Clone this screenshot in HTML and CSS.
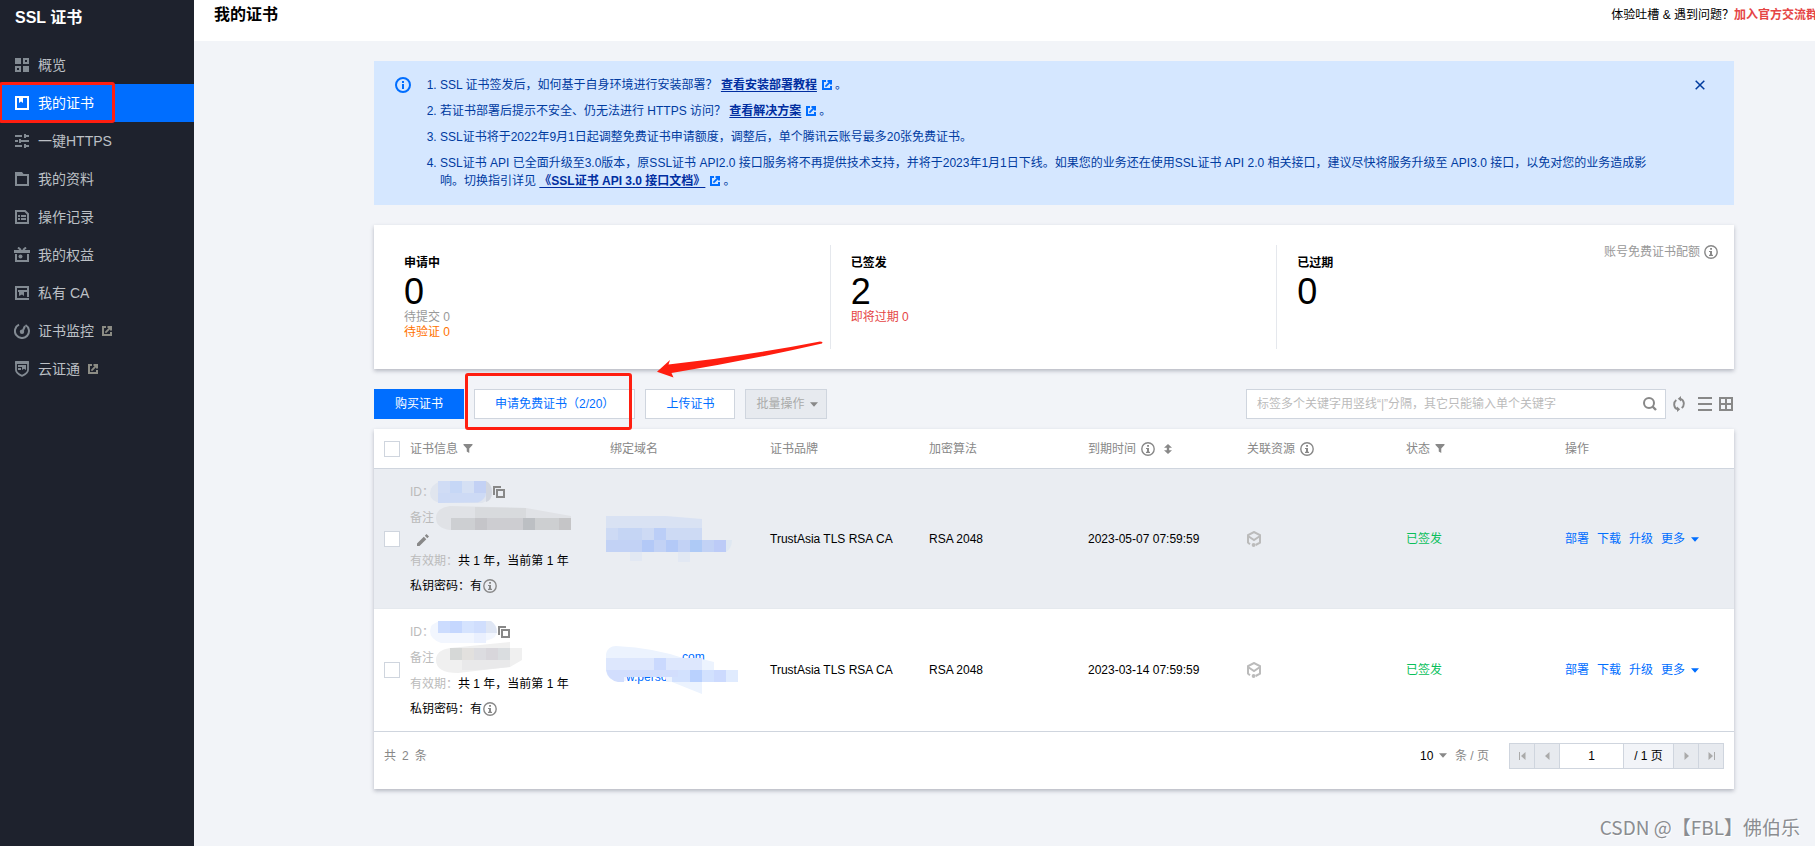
FILE: index.html
```html
<!DOCTYPE html>
<html lang="zh-CN">
<head>
<meta charset="utf-8">
<meta name="viewport" content="width=device-width, initial-scale=1">
<title>SSL 证书 - 我的证书</title>
<link rel="stylesheet" href="styles.css">
</head>
<body>
<svg class="sprite" aria-hidden="true">
  <symbol id="i-info" viewBox="0 0 14 14"><circle cx="7" cy="7" r="6.2" fill="none" stroke="currentColor" stroke-width="1.4"/><path d="M6.100 3h1.900v1.800H6.100zM5 6h3v3.700H9v1.200H5V9.700h1V7H5z" fill="currentColor"/></symbol>
  <symbol id="i-ext" viewBox="0 0 10 10"><path d="M4 1H1v8h8V6M5.500 1H9v3.500" fill="none" stroke="currentColor" stroke-width="2"/><path d="M9 1L3.400 6.600" stroke="currentColor" stroke-width="1.800"/></symbol>
  <symbol id="i-filter" viewBox="0 0 10 10"><path d="M0 0h10v1L6.4 5v5L3.6 8.4V5L0 1z" fill="currentColor"/></symbol>
  <symbol id="i-copy" viewBox="0 0 12 12"><path d="M1 9V1h7" fill="none" stroke="currentColor" stroke-width="2"/><path d="M4 4h7v7H4z" fill="none" stroke="currentColor" stroke-width="2"/></symbol>
  <symbol id="i-down" viewBox="0 0 8 5"><path d="M0 .3h8L4 4.8z" fill="currentColor"/></symbol>
  <symbol id="i-res" viewBox="0 0 14 16"><path d="M1 11.5V4.2L7 1l6 3.2v7.4L8.6 14M1 5l6 4 6-4" fill="none" stroke="currentColor" stroke-width="2"/><circle cx="6.6" cy="14" r="1.9" fill="currentColor"/><path d="M.2 11l2.8 2.2" stroke="currentColor" stroke-width="2"/></symbol>
</svg>
<div class="app">
  <aside class="side">
    <h2 class="side-title">SSL 证书</h2>
    <nav>
      <ul class="menu">
        <li><a href="#"><svg class="ico" viewBox="0 0 14 14"><path d="M0 0h6v6H0zM8 8h6v6H8z" fill="currentColor"/><path d="M9 1h4v4H9zM1 9h4v4H1z" fill="none" stroke="currentColor" stroke-width="2"/></svg>概览</a></li>
        <li class="active"><a href="#"><svg class="ico" viewBox="0 0 14 14"><path d="M1 1h12v12H1z" fill="none" stroke="currentColor" stroke-width="2"/><path d="M4 1h4v6L6 5.500 4 7z" fill="currentColor"/></svg>我的证书</a><span class="mark mark-menu"></span></li>
        <li><a href="#"><svg class="ico" viewBox="0 0 14 14"><path d="M0 2h7M9 2h5M10 0v4M0 7h3M6 7h8M5 5v4M0 12h7M9 12h5M10 10v4" fill="none" stroke="currentColor" stroke-width="2"/></svg>一键HTTPS</a></li>
        <li><a href="#"><svg class="ico" viewBox="0 0 14 14"><path d="M1 3h12v10H1z" fill="none" stroke="currentColor" stroke-width="2"/><path d="M0 0h7l1.500 2v1H0z" fill="currentColor"/></svg>我的资料</a></li>
        <li><a href="#"><svg class="ico" viewBox="0 0 14 14"><path d="M1 1h9l3 3v9H1z" fill="none" stroke="currentColor" stroke-width="2"/><path d="M3 5h2v2H3zM6 5h5v2H6zM3 8h2v2H3zM6 8h5v2H6z" fill="currentColor"/></svg>操作记录</a></li>
        <li><a href="#"><svg class="ico wide" viewBox="0 0 16 16"><path d="M2 7v7h12V7" fill="none" stroke="currentColor" stroke-width="2"/><path d="M0 3h16v3H0z" fill="currentColor"/><path d="M4 .5L7 3M12 .5L9 3" stroke="currentColor" stroke-width="2"/><circle cx="6.500" cy="9.500" r="2" fill="currentColor"/></svg>我的权益</a></li>
        <li><a href="#"><svg class="ico" viewBox="0 0 14 14"><path d="M1 0v14M0 1h14M0 13h14M13 0v4M13 6v5M3 5h11" fill="none" stroke="currentColor" stroke-width="2"/><path d="M4 6h5v4L7 8.500 4 10z" fill="currentColor"/></svg>私有 CA</a></li>
        <li><a href="#"><svg class="ico wide" viewBox="0 0 16 16"><path d="M5 1.700A7 7 0 1 0 11.500 2" fill="none" stroke="currentColor" stroke-width="2"/><circle cx="8" cy="8.800" r="2.200" fill="currentColor"/><path d="M8.500 8.500L11 3" stroke="currentColor" stroke-width="2"/></svg>证书监控<svg class="ext"><use href="#i-ext"/></svg></a></li>
        <li><a href="#"><svg class="ico tall" viewBox="0 0 14 16"><path d="M1 1h12v8c0 3-3 4.500-6 5.800C4 13.500 1 12 1 9z" fill="none" stroke="currentColor" stroke-width="1.800"/><path d="M0 2h14M3 5h4M3 8h3" stroke="currentColor" stroke-width="1.800"/><path d="M7 4h4v5L9 7.800 7 9z" fill="currentColor"/></svg>云证通<svg class="ext"><use href="#i-ext"/></svg></a></li>
      </ul>
    </nav>
  </aside>
  <div class="main">
    <header class="top">
      <h1 class="page-title">我的证书</h1>
      <p class="feedback">体验吐槽 &amp; 遇到问题？<a href="#">加入官方交流群</a></p>
    </header>
    <main class="content">
      <section class="alert">
        <svg class="alert-icon" viewBox="0 0 16 16"><circle cx="8" cy="8" r="7" fill="none" stroke="currentColor" stroke-width="2"/><path d="M7 4h2v2H7zM7 7h2v5H7z" fill="currentColor"/></svg>
        <ol class="alert-list">
          <li>SSL 证书签发后，如何基于自身环境进行安装部署？ <a href="#">查看安装部署教程</a><svg class="ext"><use href="#i-ext"/></svg>。</li>
          <li>若证书部署后提示不安全、仍无法进行 HTTPS 访问？ <a href="#">查看解决方案</a><svg class="ext"><use href="#i-ext"/></svg>。</li>
          <li>SSL证书将于2022年9月1日起调整免费证书申请额度，调整后，单个腾讯云账号最多20张免费证书。</li>
          <li>SSL证书 API 已全面升级至3.0版本，原SSL证书 API2.0 接口服务将不再提供技术支持，并将于2023年1月1日下线。如果您的业务还在使用SSL证书 API 2.0 相关接口，建议尽快将服务升级至 API3.0 接口，以免对您的业务造成影响。切换指引详见 <a href="#">《SSL证书 API 3.0 接口文档》</a><svg class="ext"><use href="#i-ext"/></svg>。</li>
        </ol>
        <button class="close" type="button" aria-label="关闭"><svg viewBox="0 0 10 10"><path d="M.7.7l8.600 8.600M9.300.7L.7 9.300" stroke="currentColor" stroke-width="1.500"/></svg></button>
      </section>

      <section class="card stats">
        <div class="stat">
          <div>
            <h3>申请中</h3>
            <p class="num">0</p>
            <p class="sub">待提交 0</p>
            <p class="sub warn">待验证 0</p>
          </div>
        </div>
        <div class="stat">
          <div>
            <h3>已签发</h3>
            <p class="num">2</p>
            <p class="sub danger">即将过期 0</p>
          </div>
        </div>
        <div class="stat">
          <div>
            <h3>已过期</h3>
            <p class="num">0</p>
          </div>
          <p class="quota">账号免费证书配额<svg class="info"><use href="#i-info"/></svg></p>
        </div>
      </section>

      <div class="toolbar">
        <button class="btn primary" type="button">购买证书</button>
        <button class="btn" type="button">申请免费证书（2/20）</button>
        <button class="btn" type="button">上传证书</button>
        <button class="btn disabled" type="button" disabled>批量操作<svg class="down"><use href="#i-down"/></svg></button>
        <div class="tools">
          <div class="search">
            <input type="text" aria-label="搜索证书" placeholder="标签多个关键字用竖线“|”分隔，其它只能输入单个关键字">
            <button class="icon-btn" type="button" aria-label="搜索"><svg class="i14" viewBox="0 0 14 14"><circle cx="6" cy="6" r="5" fill="none" stroke="currentColor" stroke-width="2"/><path d="M9.500 9.500L13 13" stroke="currentColor" stroke-width="2.400"/></svg></button>
          </div>
          <button class="icon-btn refresh" type="button" aria-label="刷新"><svg viewBox="0 0 12 16"><path d="M4.500 13.200C.5 12 .2 6.500 3.300 4M7.500 2.800c4 1.200 4.300 6.700 1.200 9.200" fill="none" stroke="currentColor" stroke-width="1.900"/><path d="M8 0v5.500L4.800 2.800zM4 16v-5.500l3.200 2.700z" fill="currentColor"/></svg></button>
          <button class="icon-btn" type="button" aria-label="列表"><svg class="i14" viewBox="0 0 14 14"><path d="M0 1h14M0 7h14M0 13h14" stroke="currentColor" stroke-width="2"/></svg></button>
          <button class="icon-btn" type="button" aria-label="网格"><svg class="i14" viewBox="0 0 14 14"><path d="M1 1h12v12H1zM7 1v12M1 7h12" fill="none" stroke="currentColor" stroke-width="2"/></svg></button>
        </div>
        <span class="mark mark-apply"></span>
        <svg class="arrow" viewBox="0 0 168 38"><path d="M1 30.700L14 19l-1.500 4.500Q90 15 164 .5l2.500.5-.5 1.500Q90 20 15.500 32l2 4.500z" fill="#ff1e10"/></svg>
      </div>

      <section class="card">
        <table class="certs">
          <colgroup><col class="c-check"><col class="c-info"><col class="c-domain"><col span="5" class="c-mid"><col></colgroup>
          <thead>
            <tr>
              <th class="check"><input type="checkbox" aria-label="全选"></th>
              <th>证书信息<svg class="filter"><use href="#i-filter"/></svg></th>
              <th>绑定域名</th>
              <th>证书品牌</th>
              <th>加密算法</th>
              <th>到期时间<svg class="info"><use href="#i-info"/></svg><svg class="sort" viewBox="0 0 8 10"><path d="M4 0l4 3.800H5.200v2.400H8L4 10 0 6.200h2.800V3.800H0z" fill="currentColor"/></svg></th>
              <th>关联资源<svg class="info"><use href="#i-info"/></svg></th>
              <th>状态<svg class="filter"><use href="#i-filter"/></svg></th>
              <th>操作</th>
            </tr>
          </thead>
          <tbody>
            <tr class="hover">
              <td class="check"><input type="checkbox" aria-label="选择证书 1"></td>
              <td>
                <div class="line"><span class="label">ID：</span><svg class="blot blot-id" width="63" height="24" viewBox="0 0 63 24"><path d="M11 1H54Q62 4 62 12T52 23H11Q0 21 0 13T11 1z" fill="#e0e5ee"/><path d="M56 1q6 3 6 11t-6 10z" fill="#d2d6df"/><path d="M8 1h48v12H8z" fill="#d0dcf5"/><path d="M20 1h12v12H20z" fill="#c6d7f6"/><path d="M32 1h12v12H32z" fill="#d5e0f4"/><path d="M44 1h12v12H44z" fill="#c3d1f4"/><path d="M8 13h48q0 6-8 9.500L8 23z" fill="#cddaf5"/></svg><svg class="copy"><use href="#i-copy"/></svg></div>
                <div class="line"><span class="label">备注</span><svg class="blot blot-note" width="135" height="26" viewBox="0 0 135 26"><path d="M14 1L90 3l45 8v14H14Q0 23 0 13T14 1z" fill="#e0e2e6"/><path d="M39 2l51 1v10H39z" fill="#d8dadd"/><path d="M15 13h24v12H15z" fill="#cdcfd2"/><path d="M39 13h12v12H39z" fill="#c5c5c9"/><path d="M51 13h36v12H51z" fill="#cdcdd1"/><path d="M87 13h12v12H87z" fill="#bcbfc3"/><path d="M99 13h24v12H99z" fill="#cdcfd1"/><path d="M123 13h12v12h-12z" fill="#c5c5c7"/></svg></div>
                <div class="line edit"><svg viewBox="0 0 12 12"><path d="M0 12V9.500L6.800 2.700l2.500 2.500L2.500 12zM7.800 1.700L9.500 0 12 2.500l-1.700 1.700z" fill="currentColor"/></svg></div>
                <div class="line last"><span class="label">有效期：</span>共 1 年，当前第 1 年</div>
                <div class="line last">私钥密码：有<svg class="info"><use href="#i-info"/></svg></div>
              </td>
              <td><svg class="blot blot-domain" width="127" height="50" viewBox="0 0 127 50"><path d="M0 2h60l36 3v9H0z" fill="#d9e2f3"/><path d="M0 14h96v12H0z" fill="#cddaf4"/><path d="M12 14h24v12H12z" fill="#c5d5f4"/><path d="M48 14h12v12H48z" fill="#bbcef7"/><path d="M0 26h120v12H0z" fill="#c2d2f5"/><path d="M36 26h12v12H36zM60 26h12v12H60z" fill="#b3c9f7"/><path d="M84 26h12v12H84z" fill="#aecaf6"/><path d="M108 26h12v12h-12z" fill="#bccbf7"/><path d="M120 26h6q0 8-6 12z" fill="#dfe8f2"/><path d="M24 38h12v9H24zM72 38h12v10H72z" fill="#e2e8f3"/></svg></td>
              <td>TrustAsia TLS RSA CA</td>
              <td>RSA 2048</td>
              <td>2023-05-07 07:59:59</td>
              <td><svg class="res"><use href="#i-res"/></svg></td>
              <td class="ok">已签发</td>
              <td><div class="ops"><a href="#">部署</a><a href="#">下载</a><a href="#">升级</a><a href="#">更多<svg class="down"><use href="#i-down"/></svg></a></div></td>
            </tr>
            <tr>
              <td class="check"><input type="checkbox" aria-label="选择证书 2"></td>
              <td>
                <div class="line"><span class="label">ID：</span><svg class="blot blot-id" width="68" height="24" viewBox="0 0 68 24"><path d="M11 1H60Q67 4 67 11T58 20L50 23H11Q0 19 0 11T11 1z" fill="#f2f6fe"/><path d="M8 1h12v12H8z" fill="#ccdcfe"/><path d="M20 1h12v12H20z" fill="#c5d7fe"/><path d="M32 1h12v12H32z" fill="#d5e3fe"/><path d="M44 1h12v12H44z" fill="#d0defd"/><path d="M56 1h5q6 4 6 12H56z" fill="#dfe6f4"/><path d="M44 13h12v10H44z" fill="#eaf0fe"/></svg><svg class="copy"><use href="#i-copy"/></svg></div>
                <div class="line"><span class="label">备注</span><svg class="blot blot-note" width="88" height="32" viewBox="0 0 88 32"><path d="M14 6L74 0v6h12v12L74 25 22 31Q0 31 0 18 0 8 14 6z" fill="#f0f0f0"/><path d="M14 6h12v12H14z" fill="#d6d8d7"/><path d="M26 6h12v12H26z" fill="#e2e0de"/><path d="M38 6h12v12H38z" fill="#dcdce0"/><path d="M50 6h12v12H50z" fill="#d8d6db"/><path d="M62 6h12v12H62z" fill="#dadde0"/><path d="M26 18h48v7l-30 3H26z" fill="#e9e9ea"/></svg></div>
                <div class="line last"><span class="label">有效期：</span>共 1 年，当前第 1 年</div>
                <div class="line last">私钥密码：有<svg class="info"><use href="#i-info"/></svg></div>
              </td>
              <td><svg class="blot blot-domain" width="133" height="52" viewBox="0 0 133 52"><text x="76" y="17" class="blot-text">com</text><text x="20" y="37" class="blot-text">w.perso</text><path d="M10 2Q50 4 80 15h16l12 3v8H96v24L66 38H60V33H20v4H12Q0 36 0 24V10Q2 2 10 2z" fill="#ecf3fe"/><path d="M0 14h96v12H0z" fill="#dde7fd"/><path d="M48 14h12v12H48z" fill="#cad9fe"/><path d="M66 26h66v12H66z" fill="#d2e1fe"/><path d="M0 26h72v7H18v5H12Q2 36 0 26z" fill="#d2defd"/><path d="M84 26h12v12H84z" fill="#b9d1fe"/><path d="M108 26h12v12h-12z" fill="#ccdafe"/><path d="M120 26h12v12h-12z" fill="#e0ebfe"/></svg></td>
              <td>TrustAsia TLS RSA CA</td>
              <td>RSA 2048</td>
              <td>2023-03-14 07:59:59</td>
              <td><svg class="res"><use href="#i-res"/></svg></td>
              <td class="ok">已签发</td>
              <td><div class="ops"><a href="#">部署</a><a href="#">下载</a><a href="#">升级</a><a href="#">更多<svg class="down"><use href="#i-down"/></svg></a></div></td>
            </tr>
          </tbody>
        </table>
        <footer class="pager-row">
          <p class="total"><span>共</span><span>2</span><span>条</span></p>
          <label class="size"><select><option>10</option></select><svg class="down"><use href="#i-down"/></svg><span>条 / 页</span></label>
          <div class="pager">
            <button type="button" disabled aria-label="首页"><svg viewBox="0 0 7 8"><path d="M0 0h1v8H0zM6.500 0v8L2 4z" fill="currentColor"/></svg></button>
            <button type="button" disabled aria-label="上一页"><svg viewBox="0 0 7 8"><path d="M5.500 0v8L1 4z" fill="currentColor"/></svg></button>
            <input type="text" value="1" aria-label="页码">
            <span>/ 1 页</span>
            <button type="button" disabled aria-label="下一页"><svg viewBox="0 0 7 8"><path d="M1.500 0v8L6 4z" fill="currentColor"/></svg></button>
            <button type="button" disabled aria-label="末页"><svg viewBox="0 0 7 8"><path d="M6 0h1v8H6zM.5 0v8L5 4z" fill="currentColor"/></svg></button>
          </div>
        </footer>
      </section>
    </main>
  </div>
  <p class="watermark">CSDN @【FBL】佛伯乐</p>
</div>
</body>
</html>
```
FILE: styles.css
```css
* { box-sizing: border-box; }

body, h1, h2, h3, p, ol, ul { margin: 0; padding: 0; }

body {
  font: 12px/18px "Liberation Sans", "Noto Sans CJK SC", sans-serif;
  color: #000;
  background: #f2f4f8;
}

a { color: #006eff; text-decoration: none; }
button, input, select { font: inherit; }
button { cursor: pointer; }
ul { list-style: none; }

.sprite { display: none; }
.app { position: relative; display: flex; min-height: 100vh; overflow: hidden; }

/* Sidebar */
.side { flex: 0 0 194px; background: #1e222d; }
.side-title { padding: 6px 15px 0; height: 46px; font-size: 16px; line-height: 24px; color: #fff; }
.menu li { position: relative; }
.menu a {
  display: flex;
  align-items: center;
  height: 38px;
  padding-left: 15px;
  font-size: 14px;
  color: #bcc0c5;
}
.menu .active a { background: #006eff; color: #fff; }
.ico { width: 14px; height: 14px; margin-right: 9px; color: #838b93; }
.ico.wide { width: 16px; height: 16px; margin: 0 8px 0 -1px; }
.ico.tall { height: 16px; }
.active .ico { color: #fff; }
.ext { width: 10px; height: 10px; margin-left: 8px; color: #8c8c84; }

/* Hand-drawn emphasis */
.mark { position: absolute; border: 3px solid #ff1e10; border-radius: 3px; pointer-events: none; }
.mark-menu { top: -2px; left: -1px; width: 116px; height: 41px; }
.mark-apply { top: -16px; left: 91px; width: 167px; height: 57px; }
.arrow { position: absolute; top: -48px; left: 282px; width: 168px; height: 38px; }

/* Header */
.main { flex: 1; min-width: 0; }
.top {
  display: flex;
  justify-content: space-between;
  height: 41px;
  padding: 3px 0 0 20px;
  background: #fff;
  overflow: hidden;
}
.page-title { font-size: 16px; line-height: 24px; }
.feedback { margin-right: -3px; line-height: 24px; white-space: nowrap; }
.feedback a { color: #e54545; font-weight: bold; }

.content { padding: 20px 81px 57px 180px; }

/* Alert */
.alert {
  display: flex;
  align-items: flex-start;
  padding: 15px 29px 15px 21px;
  margin-bottom: 20px;
  background: #d5e7ff;
  color: #003b9f;
}
.alert-icon { flex: none; width: 16px; height: 16px; margin-top: 1px; color: #006eff; }
.alert-list { flex: 1; padding-left: 29px; margin-right: 37px; }
.alert-list li { margin-bottom: 8px; }
.alert-list li:last-child { margin-bottom: 0; }
.alert-list a { color: #002da0; font-weight: bold; text-decoration: underline; text-underline-offset: 2px; }
.alert-list .ext { margin: 0 3px 0 5px; color: #006eff; vertical-align: -1px; }
.close { padding: 0; margin-top: 4px; border: 0; background: none; color: #003b9f; }
.close svg { display: block; width: 10px; height: 10px; }

/* Cards */
.card { background: #fff; box-shadow: 0 2px 4px rgba(54, 58, 80, .32); }
.stats { display: grid; grid-template-columns: repeat(3, 1fr); padding: 20px 10px; margin-bottom: 20px; }
.stat {
  display: flex;
  justify-content: space-between;
  align-items: flex-start;
  min-height: 104px;
  padding: 9px 20px 0;
  border-right: 1px solid #e5e8ed;
}
.stat:last-child { padding: 0 6px 0 20px; border: 0; }
.stat:last-child > div { padding-top: 9px; }
.stat h3 { font-size: 12px; margin-bottom: 2px; }
.num { font-size: 36px; line-height: 36px; }
.sub { line-height: 15px; color: #999; }
.sub.warn { color: #ff7200; }
.sub.danger { color: #e54545; }
.quota { display: flex; align-items: center; color: #999; line-height: 8px; }
.info { width: 14px; height: 14px; color: #888; }
.quota { line-height: 10px; }
.quota .info { margin-left: 4px; }

/* Toolbar */
.toolbar { position: relative; display: flex; gap: 10px; margin-bottom: 10px; }
.btn {
  height: 30px;
  padding: 0 20px;
  border: 1px solid #cfd5de;
  background: #fff;
  color: #006eff;
  white-space: nowrap;
}
.btn.primary { border-color: #006eff; background: #006eff; color: #fff; }
.btn.disabled { padding: 0 8px 0 10px; background: #e7eaef; color: #aaa; }
.down { width: 8px; height: 5px; margin-left: 6px; color: #888; vertical-align: 1px; }
.tools { display: flex; align-items: center; gap: 7px; margin-left: auto; padding-right: 1px; }
.search {
  display: flex;
  align-items: center;
  width: 420px;
  height: 30px;
  padding: 0 8px 0 10px;
  border: 1px solid #cfd5de;
  background: #fff;
}
.search input { flex: 1; min-width: 0; padding: 0; border: 0; outline: 0; }
.search input::placeholder { color: #bbb; }
.icon-btn { padding: 0; border: 0; background: none; color: #888; }
.icon-btn svg { display: block; }
.i14 { width: 14px; height: 14px; }
.refresh svg { width: 12px; height: 16px; }
.refresh { margin-right: 6px; }

/* Table */
.certs { width: 100%; table-layout: fixed; border-collapse: separate; border-spacing: 0; }
.c-check { width: 26px; }
.c-info { width: 200px; }
.c-domain { width: 160px; }
.c-mid { width: 159px; }
.certs th { height: 40px; padding: 0 10px; border-bottom: 1px solid #cfd5de; text-align: left; font-weight: normal; color: #888; }
.certs td { padding: 10px; border-bottom: 1px solid #cfd5de; vertical-align: middle; }
.certs .hover td { background: #eaedf2; border-color: #e5e9ee; }
.certs .check { padding: 0 0 0 10px; }
.certs th svg { vertical-align: -3px; }
.certs th .filter { vertical-align: 0; }
.certs th .info { margin-left: 5px; }
.filter { width: 10px; height: 9px; margin-left: 5px; }
.certs th .sort { width: 8px; height: 10px; margin-left: 9px; vertical-align: -1px; }
.check input { display: block; appearance: none; width: 16px; height: 16px; margin: 0; border: 1px solid #cfd5de; background: #fff; }

.line { display: flex; align-items: center; height: 26px; white-space: pre; }
.line.edit { height: 17px; padding-left: 7px; color: #888; }
.line.edit svg { width: 12px; height: 12px; }
.line.last { height: 25px; }
.line .info { margin-left: 1px; }
.label { color: #bbb; }
.blot { position: relative; flex: none; display: block; }
.blot-id { margin-left: -4px; }
.blot-note { margin-left: 2px; }
.blot-domain { margin-left: -4px; }
.blot-text { font-size: 12px; fill: #006eff; }
.copy { width: 12px; height: 12px; color: #888; }
.res { display: block; width: 14px; height: 16px; color: #bbb; }
.ok { color: #0abf5b; }
.ops { display: flex; gap: 8px; white-space: nowrap; }
.ops .down { color: #006eff; }

/* Footer */
.pager-row { display: flex; align-items: center; min-height: 57px; padding: 0 10px 10px; }
.total { display: flex; gap: 6px; margin-right: auto; color: #888; }
.size { display: flex; align-items: center; margin-right: 20px; color: #888; }
.size select { appearance: none; padding: 0; border: 0; background: none; color: #000; }
.size .down { margin: 0 8px 0 5px; }
.pager { display: flex; height: 26px; border: 1px solid #cfd5de; }
.pager > * { width: 25px; padding: 0; border: 0; border-right: 1px solid #cfd5de; text-align: center; line-height: 24px; }
.pager > :last-child { width: 24px; border-right: 0; }
.pager button { display: flex; align-items: center; justify-content: center; background: #e7eaef; color: #aaa; }
.pager button svg { width: 7px; height: 8px; }
.pager input { width: 64px; background: #fff; }
.pager span { width: 50px; background: #f2f4f8; }

.watermark {
  position: absolute;
  right: 15px;
  bottom: 6px;
  font: 19px/26px "Noto Sans CJK SC", sans-serif;
  color: #8b8d91;
  text-shadow: 1px 1px 1px #fff;
}
```
